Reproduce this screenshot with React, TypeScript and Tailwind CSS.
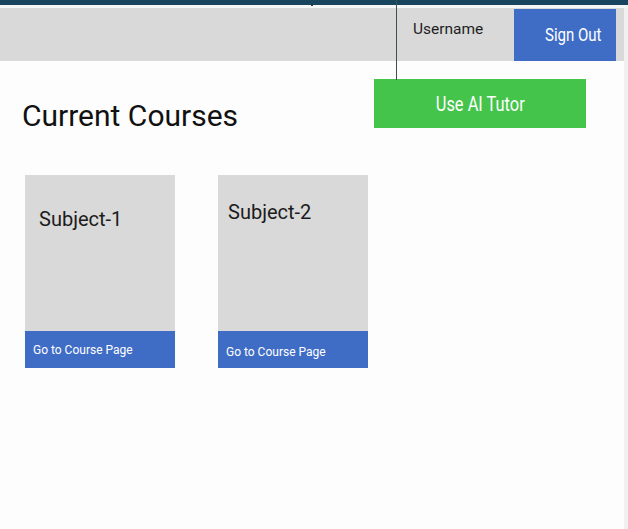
const courses = [
  { name: "Subject-1", titleClass: "pt-[32px] pl-[14px]", linkClass: "pt-[12px]" },
  { name: "Subject-2", titleClass: "pt-[25px] pl-[10px]", linkClass: "pt-[14px]" },
];

function CourseCard({ name, titleClass, linkClass }: { name: string; titleClass: string; linkClass: string }) {
  return (
    <div className="w-[150px] h-[193px] flex flex-col bg-[#d9d9d9]">
      <div className={`flex-1 text-[20px] leading-[24px] text-[#1c1c1c] ${titleClass}`}>{name}</div>
      <button className={`h-[37px] bg-[#3f6dc6] text-left pl-[8px] text-[12px] leading-[14px] text-white self-stretch flex items-start ${linkClass}`}>
        Go to Course Page
      </button>
    </div>
  );
}

export default function App() {
  return (
    <div className="relative w-[628px] h-[529px] flex flex-col bg-[#fdfdfd] font-['Roboto',sans-serif] overflow-hidden">
      <div className="h-[5px] bg-[#17455d]" />
      <div className="h-[3px] bg-[#f4f6f7]" />
      <div className="flex flex-1">
        <div className="flex-1 flex flex-col">
          {/* header */}
          <header className="h-[53px] bg-[#d9d9d9] flex items-start justify-end pr-[8px]">
            <span className="w-[101px] pt-[12px] text-[15.5px] leading-[19px] text-[#1e1e1e] whitespace-nowrap">
              Username
            </span>
            <button className="mt-[1px] w-[102px] h-[52px] bg-[#3f6dc6] text-white text-[19px] leading-[22px] pl-[31px] text-left whitespace-nowrap">
              <span className="inline-block origin-left scale-x-[0.79]">Sign Out</span>
            </button>
          </header>

          <main className="pt-[18px] pl-[22px] pr-[38px]">
            <div className="flex items-start justify-between">
              <h1 className="mt-[19px] text-[30px] leading-[35px] font-normal text-[#111]">Current Courses</h1>
              <button className="w-[212px] h-[49px] bg-[#45c44b] text-white text-[20px] leading-[24px] whitespace-nowrap">
                <span className="inline-block scale-x-[0.82]">Use AI Tutor</span>
              </button>
            </div>
            <div className="mt-[42px] ml-[3px] flex gap-[43px]">
              {courses.map((c) => (
                <CourseCard key={c.name} {...c} />
              ))}
            </div>
          </main>
        </div>
        <div className="w-[4px] bg-[#f1f1f1]" />
      </div>

      {/* connector line over the header */}
      <div className="absolute left-[396px] top-0 w-px h-[80px] bg-[#3d5054]" />
      <div className="absolute left-[311px] top-[4px] w-[2px] h-[2px] bg-[#2a3a40]" />
    </div>
  );
}
